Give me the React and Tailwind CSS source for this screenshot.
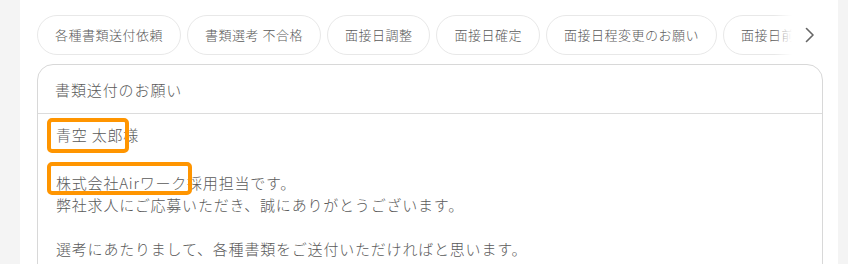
import React from 'react';

const chips = [
  '各種書類送付依頼',
  '書類選考 不合格',
  '面接日調整',
  '面接日確定',
  '面接日程変更のお願い',
  '面接日前日リマインド',
];

const App = () => {
  return (
    <div
      className="flex h-[264px] w-[848px] overflow-hidden bg-white text-[#5a5a5a]"
      style={{ fontFamily: '"Noto Sans CJK JP", "Noto Sans", sans-serif' }}
    >
      {/* left rail */}
      <div className="w-[20px] shrink-0 bg-[#f4f4f4]" />

      {/* main */}
      <div className="flex-1 pl-[17px] pr-[15px] pt-[15px]">
        {/* template chips */}
        <div className="relative flex items-center">
          <div className="flex w-[755px] gap-[6px] overflow-hidden">
            {chips.map((c) => (
              <div
                key={c}
                className="flex h-[40px] shrink-0 items-center rounded-full border border-[#e8e8e8] px-[17px] text-[13px] font-light tracking-[0.5px] whitespace-nowrap"
              >
                {c}
              </div>
            ))}
          </div>
          <div className="absolute left-[737px] top-0 h-[40px] w-[18px] bg-gradient-to-r from-white/0 to-white" />
          <button className="ml-[7px] flex h-[40px] w-[20px] items-center justify-center text-[#666]">
            <svg width="10" height="16" viewBox="0 0 10 16" fill="none">
              <path d="M2.5 1.5 9 8 2.5 14.5" stroke="currentColor" strokeWidth="1.6" strokeLinecap="round" strokeLinejoin="round" />
            </svg>
          </button>
        </div>

        {/* message card */}
        <div className="mt-[9px] h-[300px] w-[786px] rounded-t-[16px] border border-[#d8d8d8]">
          <div className="border-b border-[#dcdcdc] px-[17px] pt-[14px] pb-[12px] text-[15px] font-light leading-[22px] tracking-[0.9px]">
            書類送付のお願い
          </div>
          <div className="relative px-[18px] pt-[10px] text-[15px] font-light leading-[22px] tracking-[0.8px]">
            <p className="mb-[26px]">青空 太郎様</p>
            <p>株式会社Airワーク採用担当です。</p>
            <p>弊社求人にご応募いただき、誠にありがとうございます。</p>
            <p>&nbsp;</p>
            <p>選考にあたりまして、各種書類をご送付いただければと思います。</p>

            {/* highlight overlays */}
            <div className="absolute left-[9px] top-[4px] h-[35px] w-[82px] rounded-[5px] border-[4px] border-[#ff9500]" />
            <div className="absolute left-[9px] top-[48px] h-[33px] w-[145px] rounded-[5px] border-[4px] border-[#ff9500]" />
          </div>
        </div>
      </div>

      {/* right rail */}
      <div className="w-[10px] shrink-0 bg-[#f4f4f4]" />
    </div>
  );
};

export default App;
